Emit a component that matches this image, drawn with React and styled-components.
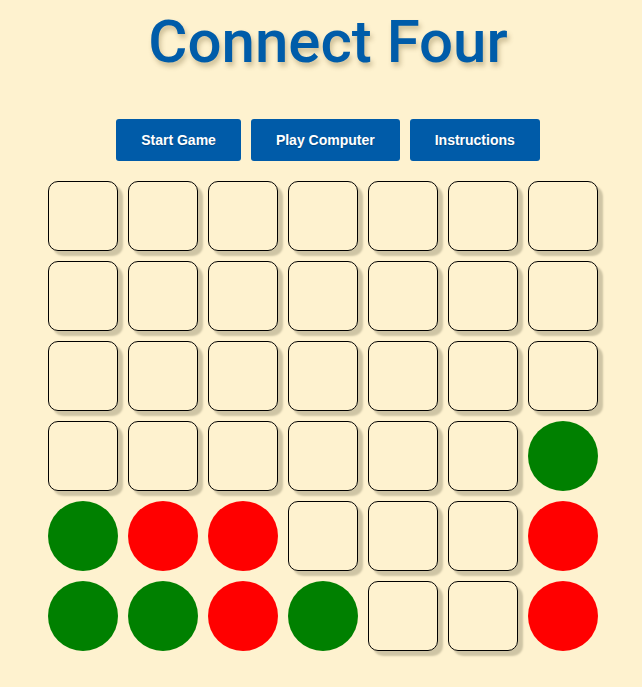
import React from 'react';
import styled, { createGlobalStyle } from 'styled-components';

const GlobalStyle = createGlobalStyle`
  html, body {
    margin: 0;
    padding: 0;
    background: #fef2cf;
  }
`;

const Page = styled.div`
  display: flex;
  flex-direction: column;
  align-items: center;
  min-height: 687px;
`;

const Header = styled.div`
  align-self: stretch;
  display: flex;
  flex-direction: column;
  align-items: center;
  padding-left: 14px;
`;

const Title = styled.h1`
  margin: 7px 0 42px;
  font-family: Roboto, "Liberation Sans", sans-serif;
  font-weight: 500;
  font-size: 60px;
  line-height: 70px;
  color: #005ca9;
  text-shadow: 2px 4px 5px rgba(90, 70, 20, 0.3);
`;

const Controls = styled.div`
  display: flex;
  gap: 10px;
  margin-bottom: 20px;
`;

const Button = styled.button`
  height: 42px;
  padding: 0 25px;
  border: none;
  border-radius: 3px;
  background: #005ba8;
  color: #fff;
  font-family: "Liberation Sans", Arial, sans-serif;
  font-weight: bold;
  font-size: 14px;
  text-shadow: 0 1px 1px rgba(0, 0, 0, 0.25);
  cursor: pointer;
`;

const Board = styled.div`
  align-self: stretch;
  display: flex;
  justify-content: center;
  padding-left: 4px;
`;

const Grid = styled.div`
  display: grid;
  grid-template-columns: repeat(7, 70px);
  grid-auto-rows: 70px;
  gap: 10px;
`;

const Cell = styled.div`
  box-sizing: border-box;
  width: 70px;
  height: 70px;
  border: 1px solid #000;
  border-radius: 10px;
  box-shadow: 5px 5px 2px #cfc5a5;
`;

const Disc = styled.div`
  width: 70px;
  height: 70px;
  border-radius: 50%;
  background: ${p => (p.$color === 'g' ? '#008000' : '#ff0000')};
`;

const board = [
  '.......',
  '.......',
  '.......',
  '......g',
  'grr...r',
  'ggrg..r',
];

export default function App() {
  return (
    <Page>
      <GlobalStyle />
      <Header>
        <Title>Connect Four</Title>
        <Controls>
          <Button>Start Game</Button>
          <Button>Play Computer</Button>
          <Button>Instructions</Button>
        </Controls>
      </Header>
      <Board>
        <Grid>
          {board.map((row, r) =>
            row.split('').map((c, i) =>
              c === '.' ? <Cell key={`${r}-${i}`} /> : <Disc key={`${r}-${i}`} $color={c} />
            )
          )}
        </Grid>
      </Board>
    </Page>
  );
}
